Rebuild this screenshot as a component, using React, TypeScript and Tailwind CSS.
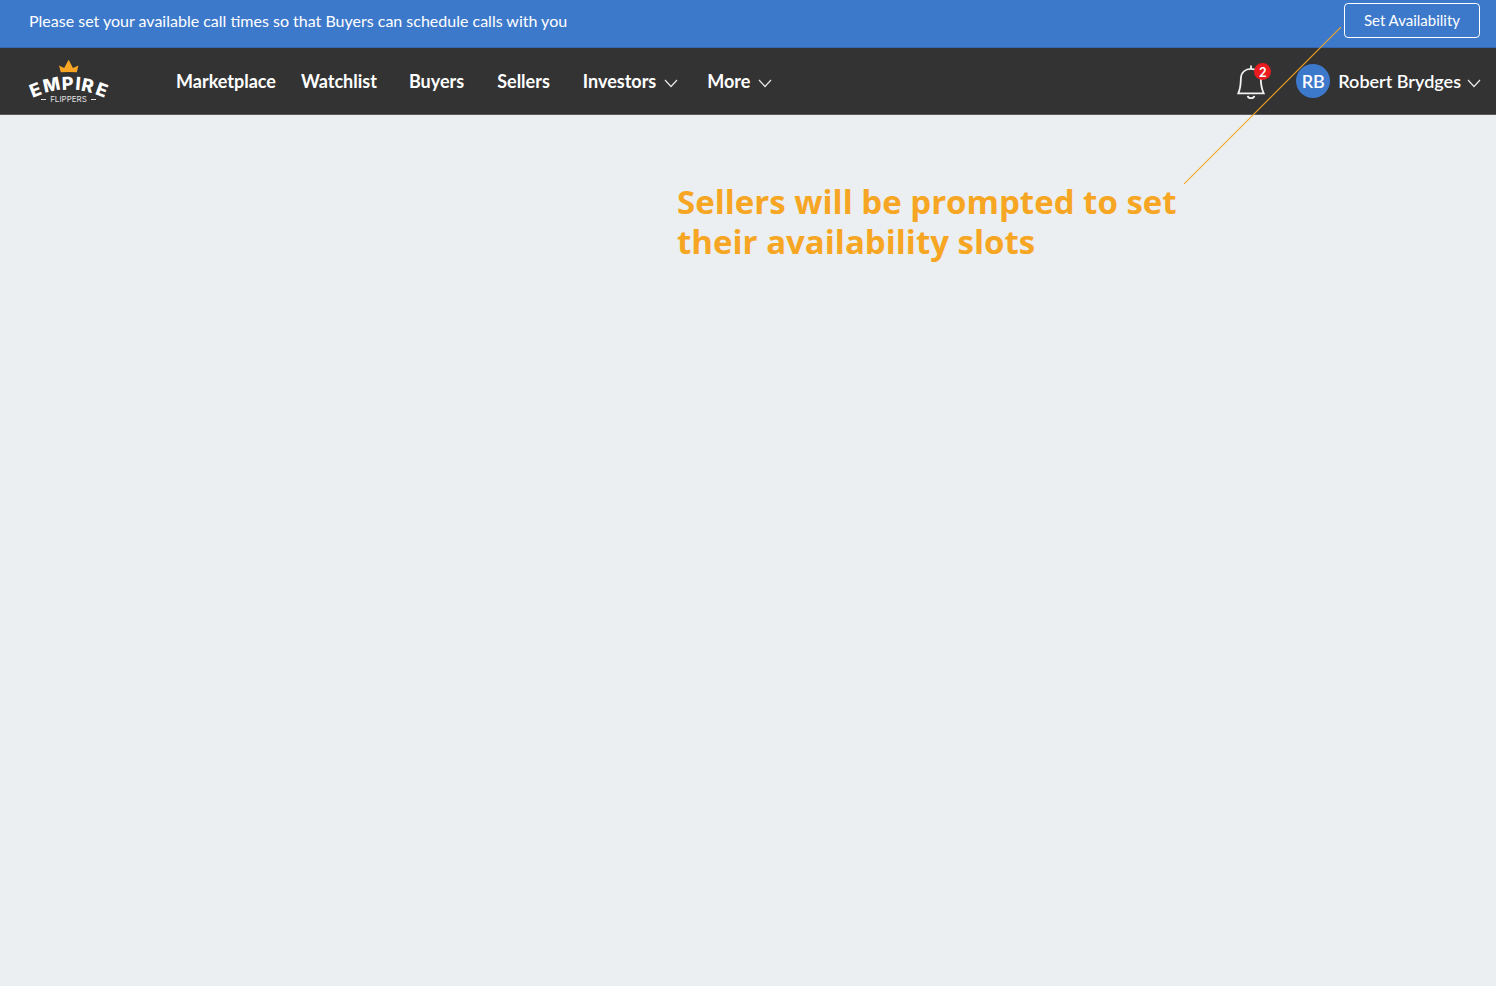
import { clsx } from "clsx";

const navLinks = [
  { label: "Marketplace", gap: "mr-[25px]" },
  { label: "Watchlist", gap: "mr-8" },
  { label: "Buyers", gap: "mr-[33px]" },
  { label: "Sellers", gap: "mr-[33px]" },
];

const navMenus = [
  { label: "Investors", gap: "mr-[29px]", inner: "gap-2" },
  { label: "More", gap: "", inner: "gap-2" },
];

function Chevron() {
  return (
    <svg className="mt-1 h-[9px] w-[14px]" viewBox="0 0 14 9" fill="none" aria-hidden="true">
      <path d="M1 1l6 6.5L13 1" stroke="#e8e8e8" strokeWidth="1.2" />
    </svg>
  );
}

function Logo() {
  return (
    <svg className="h-11 w-20 overflow-visible" viewBox="29 59 80 44" role="img" aria-label="Empire Flippers">
      <path d="M59 65.500l5.200 2.600L68.600 59.700L73 68.100L78.400 65.500L76.800 72.300Q68.800 71.500 60.800 72.300Z" fill="#f6a623" />
      <text
        x="32.500 44.500 62 75 80.500 94.500"
        y="97.800 92.800 90 89.700 90.500 94"
        rotate="-21 -12 -2 5 12 20"
        className="fill-white font-['Inter',sans-serif] text-[18px] font-extrabold"
      >
        EMPIRE
      </text>
      <text x="68.500" y="102" textAnchor="middle" className="fill-[#e0e0e0] font-['Inter',sans-serif] text-[8px] font-normal">
        FLIPPERS
      </text>
      <path d="M41 99.500h5M91 99.500h5" stroke="#e0e0e0" strokeWidth="1" />
    </svg>
  );
}

function Bell() {
  return (
    <svg className="h-9 w-7" viewBox="0 0 28 36" fill="none" stroke="#f2f2f2" strokeWidth="1.8" aria-hidden="true">
      <path d="M14 2.500v3.500" />
      <path d="M1.300 30.300h25.400c-2.200-4.800-2.900-9.200-2.900-15C23.800 9.300 19.600 5.900 14 5.900S4.200 9.300 3.900 15.300c-.1 5.800-.4 10.200-2.600 15z" />
      <path d="M10.800 32.800c.4 3.200 6 3.200 6.400 0" strokeWidth="2" />
    </svg>
  );
}

export default function App() {
  return (
    <div className="relative min-h-screen bg-[#ebeff2] font-['Lato',sans-serif]">
      <div className="flex h-12 items-start justify-between border-b border-[#3568b0] bg-[#3d79cb] pt-[3px] pr-4 pl-[29px] text-white">
        <p className="text-base leading-9">
          Please set your available call times so that Buyers can schedule calls with you
        </p>
        <button type="button" className="h-[35px] w-[136px] rounded border border-white text-[15px]">
          Set Availability
        </button>
      </div>

      <header className="flex h-[67px] items-center border-b border-[#5a5a5a] bg-[#333333] pr-[15px] pl-[29px] text-lg font-bold text-white">
        <a href="#" className="mr-[67px]">
          <Logo />
        </a>
        <nav className="flex items-center">
          {navLinks.map((link) => (
            <a key={link.label} href="#" className={link.gap}>
              {link.label}
            </a>
          ))}
          {navMenus.map((menu) => (
            <button key={menu.label} type="button" className={clsx("flex items-center", menu.gap, menu.inner)}>
              {menu.label}
              <Chevron />
            </button>
          ))}
        </nav>
        <div className="ml-auto flex items-center">
          <button type="button" aria-label="Notifications" className="relative mr-[31px]">
            <Bell />
            <span className="absolute top-0 -right-1.5 flex size-[17px] items-center justify-center rounded-full bg-[#ea1c20] text-[13px] leading-4">
              2
            </span>
          </button>
          <button type="button" className="flex items-center font-semibold">
            <span className="mr-2 flex size-[34px] items-center justify-center rounded-full bg-[#3d79cb]">RB</span>
            <span className="mr-1.5">Robert Brydges</span>
            <Chevron />
          </button>
        </div>
      </header>

      <main className="flex justify-end pt-[67px] pr-[315px]">
        <h1 className="w-[504px] font-['Open_Sans',sans-serif] text-[33px] leading-10 font-bold text-[#f6a623]">
          Sellers will be prompted to set their availability slots
        </h1>
      </main>

      <svg className="pointer-events-none absolute top-[27px] right-[155px] h-[157px] w-[157px]" viewBox="0 0 157 157" aria-hidden="true">
        <path d="M0 157L157 0" stroke="#f6a623" strokeWidth="1.1" />
      </svg>
    </div>
  );
}
